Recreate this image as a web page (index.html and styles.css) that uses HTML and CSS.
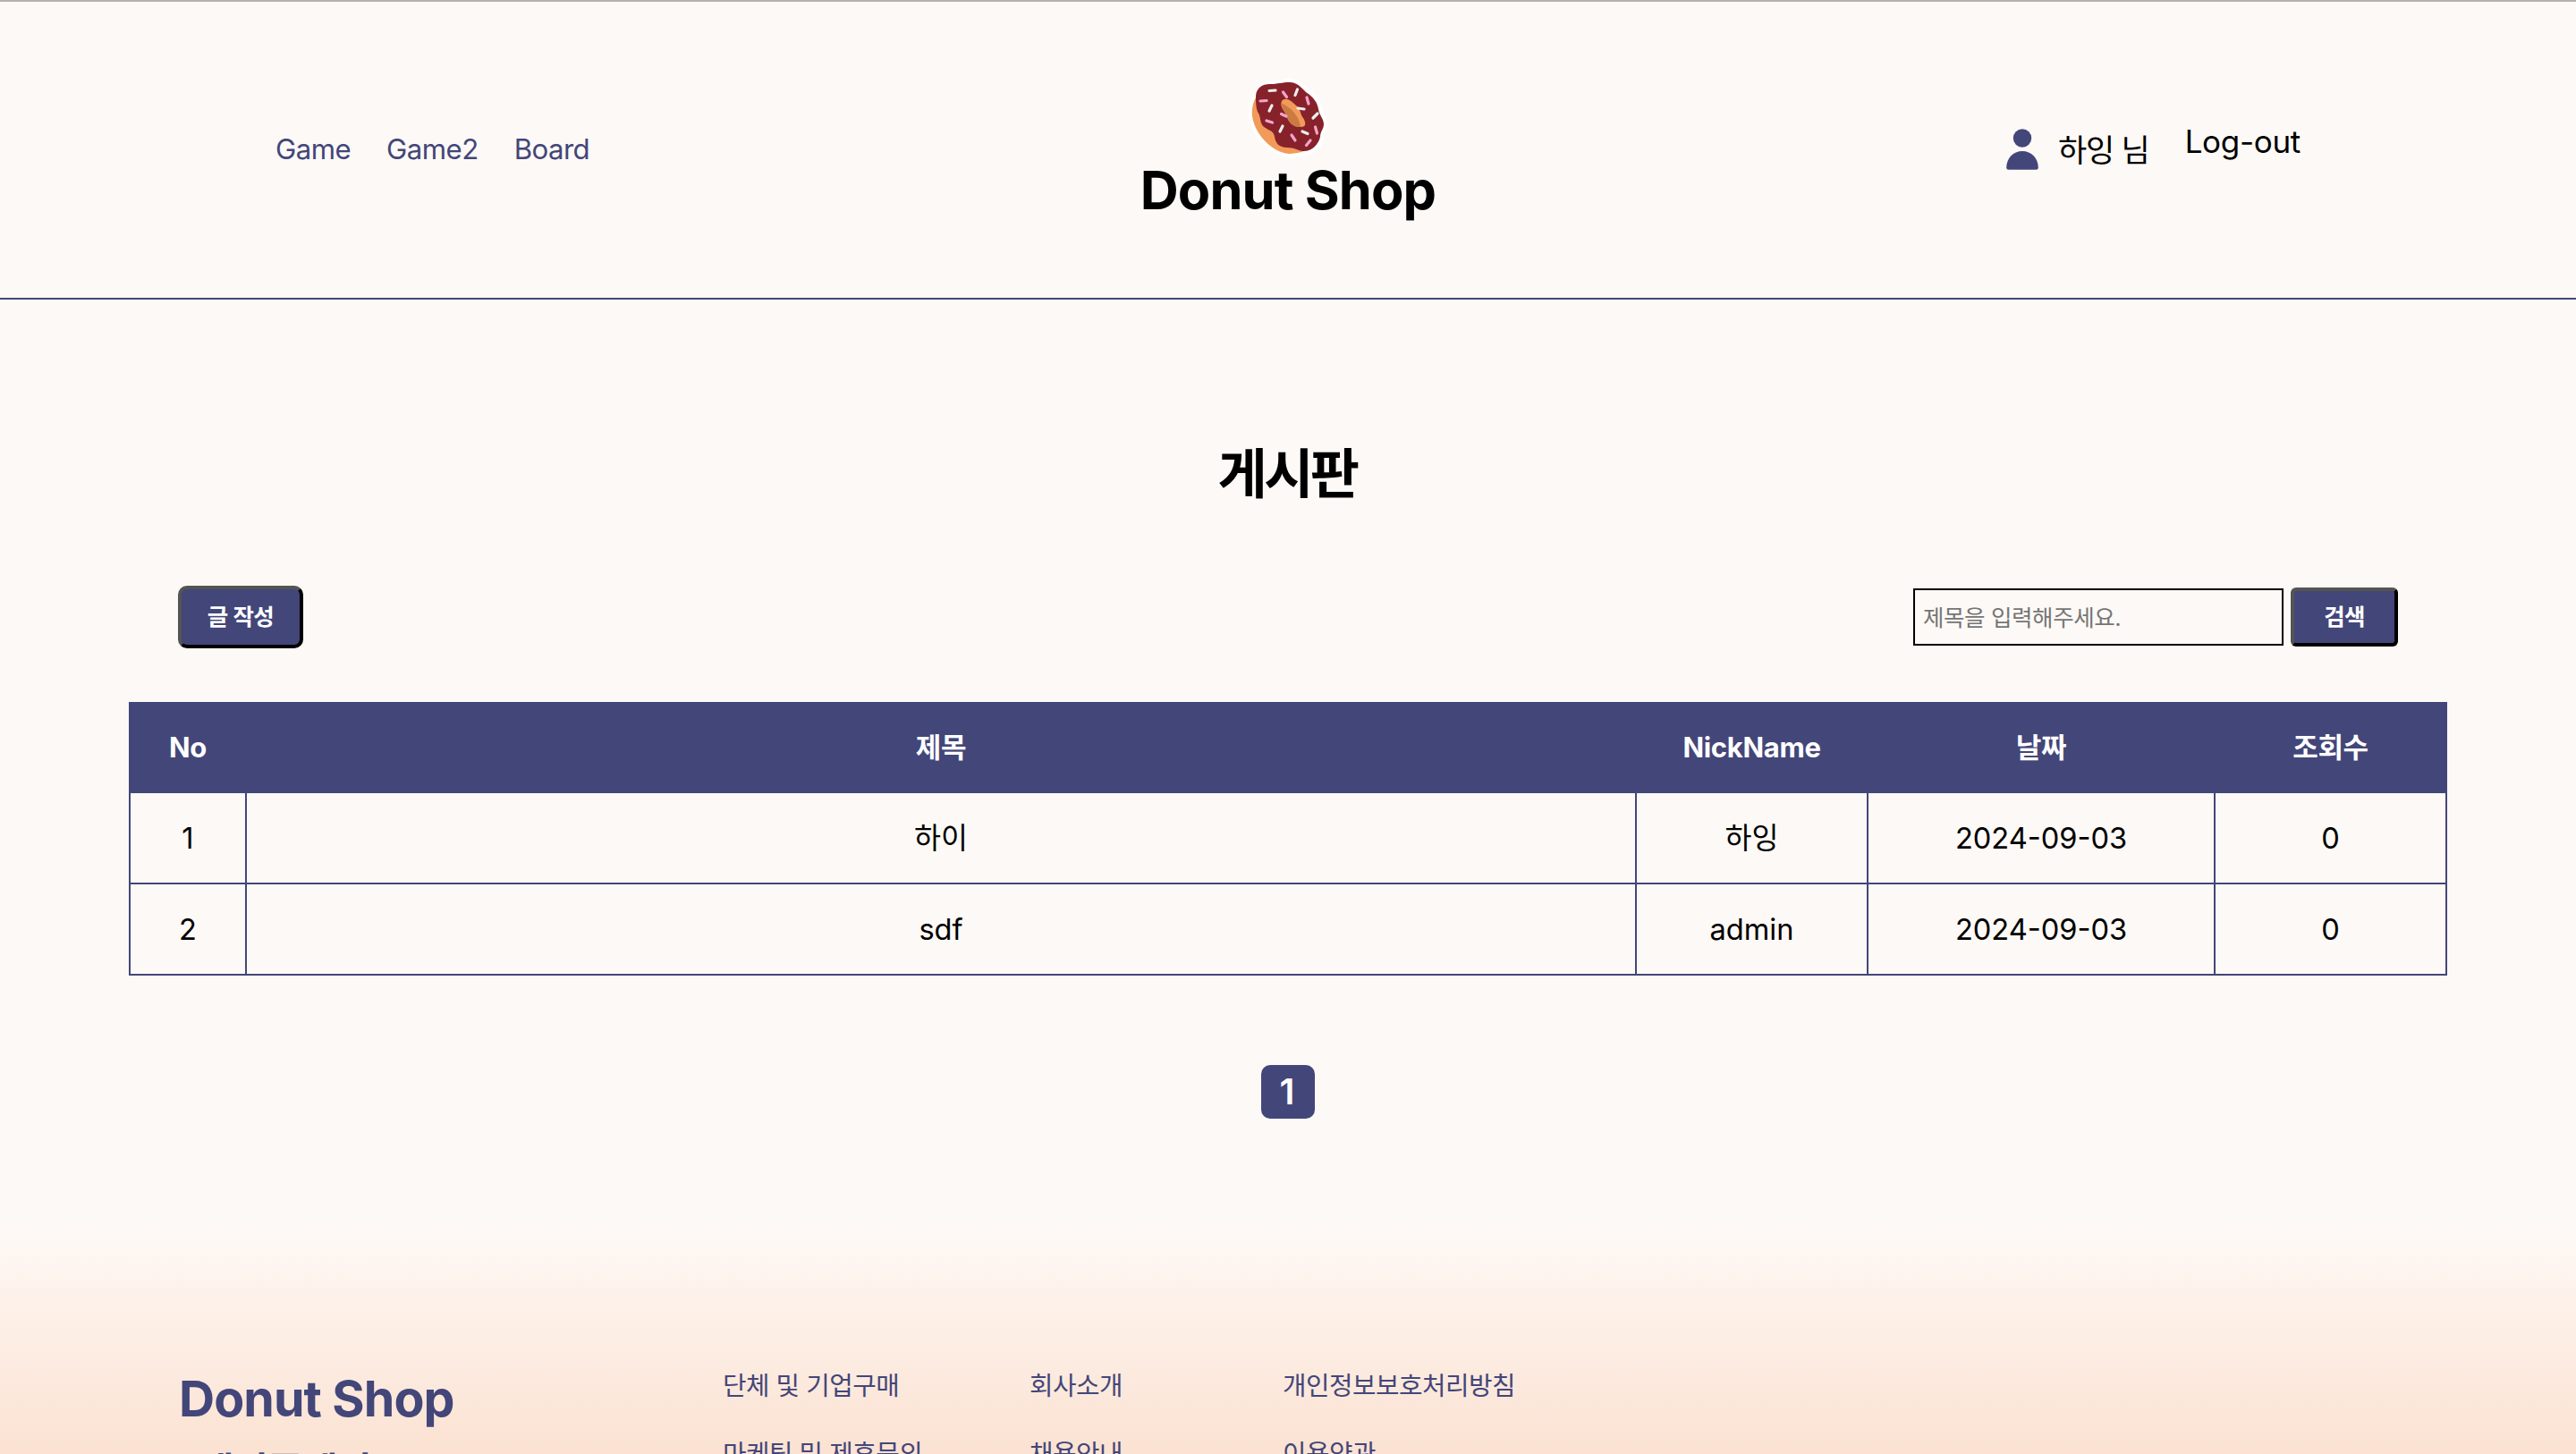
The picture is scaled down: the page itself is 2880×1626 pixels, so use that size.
FILE: index.html
```html
<!DOCTYPE html>
<html lang="ko">
<head>
<meta charset="utf-8">
<title>Donut Shop</title>
<link rel="stylesheet" href="styles.css">
</head>
<body>
<header class="header">
  <nav class="nav"><a>Game</a><a>Game2</a><a>Board</a></nav>
  <div class="brand">
    <svg class="donut" width="90" height="94" viewBox="0 0 90 94">
      <g class="halo"><path d="M11 19C12 10 17 6 26 6.500C34 7 38 4 46 4C54 4 58 9 64 14C73 20 77 26 79 35C80 41 84 45 84 51C84 56 80 59 80 66C79 75 70 82 61 81C64 82 57 84 46 84C27 81 5 62 4 39C4 31 6 24 9 20Z"/></g>
      <path fill="#f29a59" d="M9 19C5 26 3 34 4 42C7 64 29 84 46 84Q54 84 62 81L78 50L40 8Z"/>
      <path fill="#87222b" d="M8 19C9 10 15 6 24 6C33 6 37 4 46 4C54 4 58 9 64 15C73 21 77 27 78 34C79 41 84 45 84 51C84 56 80 59 80 65C78 74 70 82 60 81C54 80 52 77 43 77C34 77 30 72 29 65C28 57 21 58 16 53C12 48 14 42 10 37C8 32 8 26 8 19Z"/>
      <path fill="#f29a59" d="M37 25C41 20 47 24 52 29C59 34 57 39 61 44C64 49 65 54 58 54C49 54 45 49 43 43C41 36 34 32 37 25Z"/>
      <path fill="#ca7b42" d="M36 27C48 32 57 43 58 54C49 54 45 49 43 43C41 37 37 33 36 27Z"/>
      <path class="sprinkle white" d="M23 13.500L30 13M54.500 12L52 18.500M26 30L23 36M55 33L62 34M77 39L72 44M38 53L35 59M60 59L66 61.500"/>
      <path class="sprinkle pink" d="M38.500 15L42.500 20.500M13 25L20 24.500M65 21L67 28M36.500 39.500L42 42M20 47L26.500 49M74.500 54L76.500 61M48 63L52 69M69 69L64.500 74.500"/>
    </svg>
    <h1>Donut Shop</h1>
  </div>
  <div class="account">
    <svg width="36" height="46" viewBox="0 0 36 46" fill="#434679"><circle cx="18" cy="10.500" r="10.200"/><path d="M.2 43.500C.2 33 8 25 18 25s17.800 8 17.800 18.500Q35.800 45.800 33.500 45.800h-31Q.2 45.800.2 43.500Z"/></svg>
    <span class="user">하잉 님</span><a class="logout">Log-out</a>
  </div>
</header>
<main>
  <h2>게시판</h2>
  <div class="toolbar">
    <button class="write">글 작성</button>
    <form class="search"><input type="text" placeholder="제목을 입력해주세요."><button type="button">검색</button></form>
  </div>
  <table>
    <colgroup><col class="c-no"><col class="c-title"><col class="c-nick"><col class="c-date"><col class="c-hit"></colgroup>
    <thead><tr><th>No</th><th>제목</th><th>NickName</th><th>날짜</th><th>조회수</th></tr></thead>
    <tbody>
      <tr><td>1</td><td>하이</td><td>하잉</td><td>2024-09-03</td><td>0</td></tr>
      <tr><td>2</td><td>sdf</td><td>admin</td><td>2024-09-03</td><td>0</td></tr>
    </tbody>
  </table>
  <div class="pages"><a class="page">1</a></div>
</main>
<footer>
  <div class="about"><strong>Donut Shop</strong><strong class="sub">네이플페이</strong></div>
  <ul class="col1"><li>단체 및 기업구매</li><li>마케팅 및 제휴문의</li></ul>
  <ul class="col2"><li>회사소개</li><li>채용안내</li></ul>
  <ul class="col3"><li>개인정보보호처리방침</li><li>이용약관</li></ul>
</footer>
</body>
</html>
```
FILE: styles.css
```css
* { box-sizing: border-box; }
body { margin: 0; height: 1626px; overflow: hidden; background: #fdf9f6; color: #000; font-family: Inter, "Noto Sans CJK KR", sans-serif; font-size: 32.6px; border-top: 2px solid #b4b1af; display: flex; flex-direction: column; }
h1, h2, ul { margin: 0; padding: 0; }
.header { height: 333px; flex: none; border-bottom: 2px solid #434679; display: grid; grid-template-columns: 1fr 360px 1fr; padding: 0 308px 1px; align-items: center; }
.nav { display: flex; gap: 40px; color: #434679; font-size: 31.2px; letter-spacing: -.55px; line-height: 40px; }
.brand { display: flex; flex-direction: column; align-items: center; padding-top: 3px; }
.donut { display: block; margin-left: 2px; }
.halo { fill: #fff; stroke: #fff; stroke-width: 8; stroke-linejoin: round; }
.sprinkle { fill: none; stroke-width: 3.200; stroke-linecap: round; }
.white { stroke: #eee; }
.pink { stroke: #f5a3ca; }
h1 { font-size: 59.5px; line-height: 72px; letter-spacing: -.9px; white-space: nowrap; margin-top: -6px; margin-bottom: 1px; }
.account { display: flex; justify-content: flex-end; align-items: center; font-size: 35px; line-height: 44px; white-space: nowrap; }
.user { margin-left: 22px; letter-spacing: -1.200px; padding-top: 1px; }
.logout { margin-left: 40px; margin-bottom: 18px; letter-spacing: -.3px; }
main { height: 1027px; flex: none; }
h2 { padding: 155px 2px 0 0; height: 320px; text-align: center; font-size: 60px; line-height: 80px; letter-spacing: -3.500px; }
.toolbar { display: flex; justify-content: space-between; padding: 0 199px; height: 130px; }
button { font: 600 25.5px/32px Inter, "Noto Sans CJK KR", sans-serif; letter-spacing: -.6px; color: #fff; background: #434679; border: 4px outset #000; padding: 0; }
.write { width: 140px; height: 70px; border-radius: 10px; }
.search { display: flex; gap: 8px; padding-top: 2px; }
.search input { width: 414px; height: 64px; margin-top: 1px; border: 2px solid #000; border-radius: 0; background: transparent; padding: 0 9px; font: 25.5px Inter, "Noto Sans CJK KR", sans-serif; letter-spacing: -.4px; }
.search input::placeholder { color: #757575; }
.search button { width: 120px; height: 66px; border-radius: 6px; }
table { width: 2592px; margin: 0 auto; border-collapse: collapse; table-layout: fixed; text-align: center; }
.c-no { width: 130px; } .c-title { width: 1554px; } .c-nick { width: 259px; } .c-date { width: 388px; } .c-hit { width: 259px; }
th { background: #434679; color: #fff; height: 100px; padding: 0; font-size: 31px; line-height: 40px; font-weight: 700; letter-spacing: -.3px; border: 2px solid #434679; }
td { border: 2px solid #434679; height: 102px; padding: 0; line-height: 40px; }
.pages { display: flex; justify-content: center; padding-top: 100px; }
.page { width: 60px; height: 60px; padding-right: 2px; border-radius: 10px; background: #434679; color: #fff; font-size: 40px; font-weight: 600; line-height: 60px; text-align: center; }
footer { flex: 1; min-height: 0; background: linear-gradient(#fefaf7, #fbe2d2); display: flex; color: #434679; padding: 163px 200px 0; font-size: 28.8px; }
ul { list-style: none; white-space: nowrap; }
li { height: 76px; line-height: 50px; letter-spacing: -.5px; }
.about { width: 608px; font-size: 55.5px; line-height: 80px; letter-spacing: -.9px; }
.about strong { display: block; margin-top: -1px; }
.about .sub { padding-left: 22px; font-size: 43px; line-height: 60px; margin-top: 11px; letter-spacing: -1px; }
.col1 { width: 343px; } .col2 { width: 283px; }
```
